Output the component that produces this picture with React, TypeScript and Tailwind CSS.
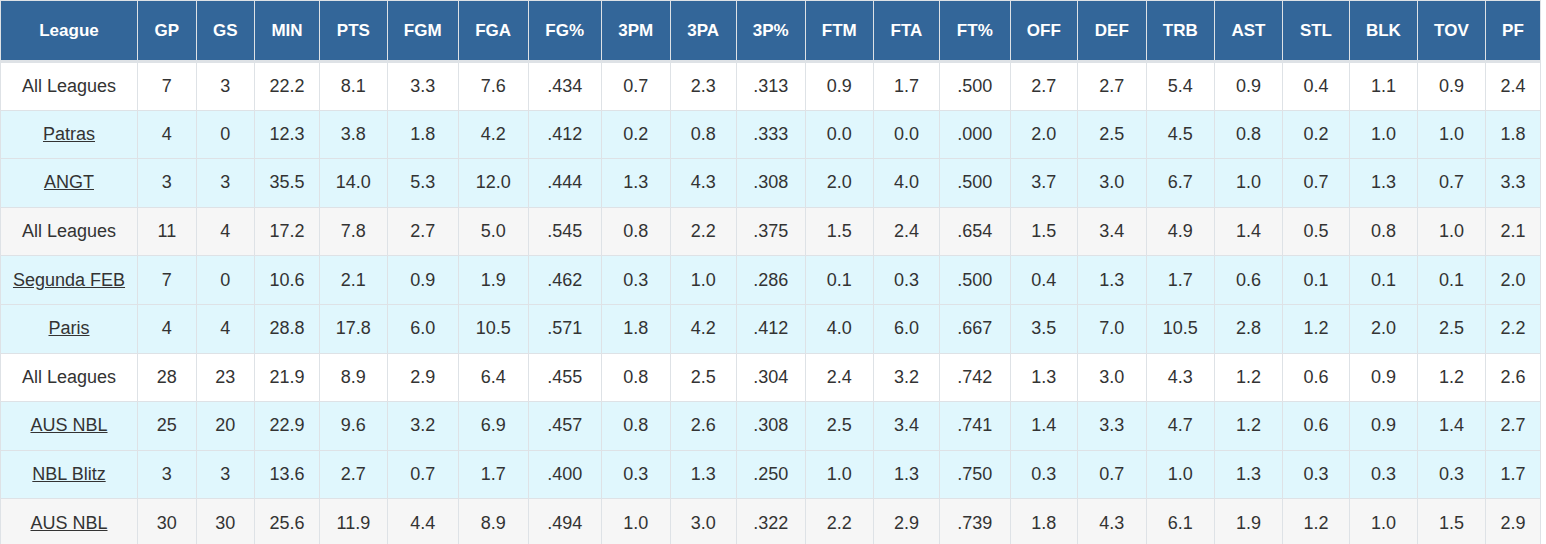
import React from "react";

type Row = {
  league: string;
  link: boolean;
  tone: "white" | "cyan" | "grey";
  stats: string[];
};

const columns: { label: string; width: string }[] = [
  { label: "League", width: "w-[137px]" },
  { label: "GP", width: "w-[58.7px]" },
  { label: "GS", width: "w-[58.3px]" },
  { label: "MIN", width: "w-[65px]" },
  { label: "PTS", width: "w-[67.7px]" },
  { label: "FGM", width: "w-[71px]" },
  { label: "FGA", width: "w-[70px]" },
  { label: "FG%", width: "w-[73px]" },
  { label: "3PM", width: "w-[69px]" },
  { label: "3PA", width: "w-[66px]" },
  { label: "3P%", width: "w-[69px]" },
  { label: "FTM", width: "w-[68.3px]" },
  { label: "FTA", width: "w-[66px]" },
  { label: "FT%", width: "w-[70.7px]" },
  { label: "OFF", width: "w-[67.3px]" },
  { label: "DEF", width: "w-[68.7px]" },
  { label: "TRB", width: "w-[68.3px]" },
  { label: "AST", width: "w-[68px]" },
  { label: "STL", width: "w-[67px]" },
  { label: "BLK", width: "w-[68px]" },
  { label: "TOV", width: "w-[68px]" },
  { label: "PF", width: "w-[55px]" },
];

const rows: Row[] = [
  { league: "All Leagues", link: false, tone: "white", stats: ["7", "3", "22.2", "8.1", "3.3", "7.6", ".434", "0.7", "2.3", ".313", "0.9", "1.7", ".500", "2.7", "2.7", "5.4", "0.9", "0.4", "1.1", "0.9", "2.4"] },
  { league: "Patras", link: true, tone: "cyan", stats: ["4", "0", "12.3", "3.8", "1.8", "4.2", ".412", "0.2", "0.8", ".333", "0.0", "0.0", ".000", "2.0", "2.5", "4.5", "0.8", "0.2", "1.0", "1.0", "1.8"] },
  { league: "ANGT", link: true, tone: "cyan", stats: ["3", "3", "35.5", "14.0", "5.3", "12.0", ".444", "1.3", "4.3", ".308", "2.0", "4.0", ".500", "3.7", "3.0", "6.7", "1.0", "0.7", "1.3", "0.7", "3.3"] },
  { league: "All Leagues", link: false, tone: "grey", stats: ["11", "4", "17.2", "7.8", "2.7", "5.0", ".545", "0.8", "2.2", ".375", "1.5", "2.4", ".654", "1.5", "3.4", "4.9", "1.4", "0.5", "0.8", "1.0", "2.1"] },
  { league: "Segunda FEB", link: true, tone: "cyan", stats: ["7", "0", "10.6", "2.1", "0.9", "1.9", ".462", "0.3", "1.0", ".286", "0.1", "0.3", ".500", "0.4", "1.3", "1.7", "0.6", "0.1", "0.1", "0.1", "2.0"] },
  { league: "Paris", link: true, tone: "cyan", stats: ["4", "4", "28.8", "17.8", "6.0", "10.5", ".571", "1.8", "4.2", ".412", "4.0", "6.0", ".667", "3.5", "7.0", "10.5", "2.8", "1.2", "2.0", "2.5", "2.2"] },
  { league: "All Leagues", link: false, tone: "white", stats: ["28", "23", "21.9", "8.9", "2.9", "6.4", ".455", "0.8", "2.5", ".304", "2.4", "3.2", ".742", "1.3", "3.0", "4.3", "1.2", "0.6", "0.9", "1.2", "2.6"] },
  { league: "AUS NBL", link: true, tone: "cyan", stats: ["25", "20", "22.9", "9.6", "3.2", "6.9", ".457", "0.8", "2.6", ".308", "2.5", "3.4", ".741", "1.4", "3.3", "4.7", "1.2", "0.6", "0.9", "1.4", "2.7"] },
  { league: "NBL Blitz", link: true, tone: "cyan", stats: ["3", "3", "13.6", "2.7", "0.7", "1.7", ".400", "0.3", "1.3", ".250", "1.0", "1.3", ".750", "0.3", "0.7", "1.0", "1.3", "0.3", "0.3", "0.3", "1.7"] },
  { league: "AUS NBL", link: true, tone: "grey", stats: ["30", "30", "25.6", "11.9", "4.4", "8.9", ".494", "1.0", "3.0", ".322", "2.2", "2.9", ".739", "1.8", "4.3", "6.1", "1.9", "1.2", "1.0", "1.5", "2.9"] },
];

const toneClass = {
  white: "bg-white",
  cyan: "bg-[#e0f7fd]",
  grey: "bg-[#f6f6f6]",
};

export default function App() {
  return (
    <div className="w-[1546px] bg-white font-['Liberation_Sans',Arial,sans-serif]">
      <table className="w-[1540px] table-fixed border-collapse text-center">
        <thead>
          <tr className="h-[61px] bg-[#336699] text-white">
            {columns.map((c) => (
              <th
                key={c.label}
                className={`${c.width} border border-[#dee2e6] border-b-[3px] text-[17px] font-bold`}
              >
                {c.label}
              </th>
            ))}
          </tr>
        </thead>
        <tbody>
          {rows.map((r, i) => (
            <tr key={i} className={`h-[48.6px] ${toneClass[r.tone]} text-[18px] text-[#333]`}>
              <td className="border border-[#dee2e6] px-1">
                {r.link ? (
                  <a href="#" className="underline text-[#333]">
                    {r.league}
                  </a>
                ) : (
                  r.league
                )}
              </td>
              {r.stats.map((s, j) => (
                <td key={j} className="border border-[#dee2e6]">
                  {s}
                </td>
              ))}
            </tr>
          ))}
        </tbody>
      </table>
    </div>
  );
}
